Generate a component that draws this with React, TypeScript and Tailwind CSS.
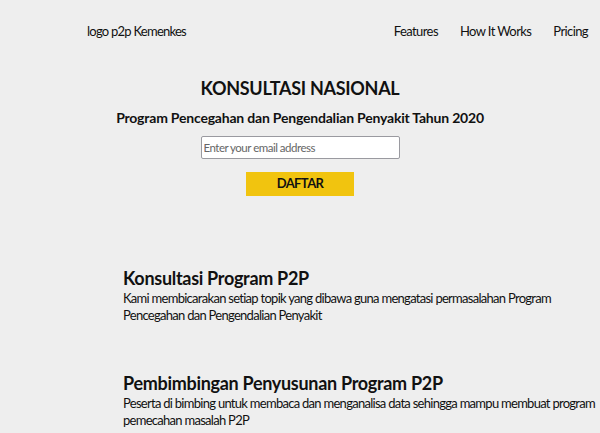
import React from 'react';

const features = [
  {
    title: 'Konsultasi Program P2P',
    body: 'Kami membicarakan setiap topik yang dibawa guna mengatasi permasalahan Program Pencegahan dan Pengendalian Penyakit',
  },
  {
    title: 'Pembimbingan Penyusunan Program P2P',
    body: 'Peserta di bimbing untuk membaca dan menganalisa data sehingga mampu membuat program pemecahan masalah P2P',
  },
];

export default function App() {
  return (
    <div className="min-h-[433px] bg-[#eeeeee] text-[#111111] font-['Lato',sans-serif]">
      <header className="flex items-center justify-between pl-[87px] pr-[12px] h-[64px]">
        <div className="text-[13px] tracking-[-0.75px]">logo p2p Kemenkes</div>
        <nav className="flex gap-[22px] text-[13px] tracking-[-0.6px]">
          <a>Features</a>
          <a>How It Works</a>
          <a>Pricing</a>
        </nav>
      </header>

      {/* Hero */}
      <section className="flex flex-col items-center pt-[12px]">
        <h1 className="text-[18px] font-bold leading-[24px] tracking-[-0.3px]">KONSULTASI NASIONAL</h1>
        <h2 className="text-[14px] font-bold leading-[20px] mt-[8px] tracking-[-0.2px]">
          Program Pencegahan dan Pengendalian Penyakit Tahun 2020
        </h2>
        <input
          type="email"
          placeholder="Enter your email address"
          className="mt-[8px] w-[199px] h-[23px] bg-white border border-[#9a9aa0] rounded-[2px] px-[2px] text-[11.5px] tracking-[-0.5px] placeholder:text-[#666666] outline-none"
        />
        <button className="mt-[13px] w-[108px] h-[24px] bg-[#f1c40f] text-[13px] font-bold tracking-[-0.6px] text-[#111111]">
          DAFTAR
        </button>
      </section>

      {/* Features */}
      <section className="pl-[123px] pt-[70px] flex flex-col gap-[47px]">
        {features.map((f) => (
          <div key={f.title}>
            <h3 className="text-[18px] font-bold leading-[24px] tracking-[-0.3px]">{f.title}</h3>
            <p className="text-[13px] leading-[17px] tracking-[-0.72px]">{f.body}</p>
          </div>
        ))}
      </section>
    </div>
  );
}
